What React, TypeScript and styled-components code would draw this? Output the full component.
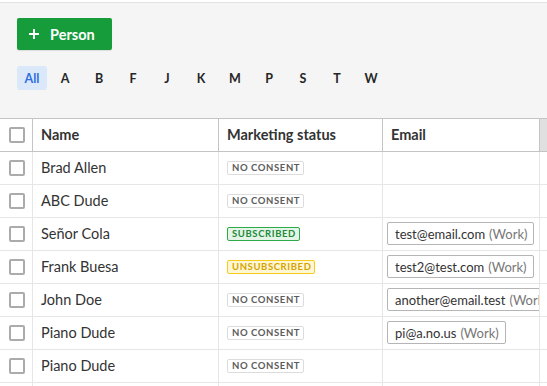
import * as React from 'react';
import styled, { createGlobalStyle, css } from 'styled-components';

const Global = createGlobalStyle`
  html, body { margin: 0; padding: 0; background: #fff; }
  body { font-family: Lato, "Liberation Sans", sans-serif; color: #333; overflow: hidden; }
`;

const Page = styled.div`
  width: 547px;
  height: 386px;
  overflow: hidden;
  padding-top: 2px;
  box-sizing: border-box;
`;

const Toolbar = styled.div`
  background: #f5f5f5;
  border-top: 1px solid #e2e2e2;
  height: 116px;
  box-sizing: border-box;
  padding: 15px 17px 0;
`;

const AddButton = styled.button`
  display: flex;
  align-items: center;
  gap: 10px;
  height: 32px;
  padding: 0 17px 0 11px;
  border: none;
  border-radius: 2px;
  background: #169c3b;
  color: #fff;
  font-family: inherit;
  font-weight: 700;
  font-size: 14.5px;
  box-shadow: 0 1px 1px rgba(0,0,0,0.1);
`;

const Letters = styled.div`
  display: flex;
  align-items: center;
  margin-top: 16px;
`;

const Letter = styled.span<{ $active?: boolean }>`
  width: 34px;
  height: 24px;
  display: flex;
  align-items: center;
  justify-content: center;
  font-size: 12.5px;
  font-weight: 700;
  color: #262626;
  border-radius: 3px;
  ${p => p.$active && css`
    width: 30px;
    margin-right: 1px;
    background: #dbe8fa;
    color: #2f6fe0;
  `}
`;

const Row = styled.div<{ $head?: boolean }>`
  display: grid;
  grid-template-columns: 33px 186px 164px 157px 1fr;
  height: 33px;
  box-sizing: border-box;
  border-bottom: 1px solid ${p => (p.$head ? '#c4c4c4' : '#e6e6e6')};
  ${p => p.$head && css`
    border-top: 1px solid #c4c4c4;
    height: 34px;
    font-weight: 700;
  `}
`;

const Cell = styled.div<{ $head?: boolean; $filler?: boolean }>`
  display: flex;
  align-items: center;
  padding: 0 0 1px 8px;
  border-right: 1px solid ${p => (p.$head ? '#c4c4c4' : '#e6e6e6')};
  font-size: 14.5px;
  overflow: hidden;
  white-space: nowrap;
  ${p => p.$filler && css`
    border-right: none;
    background: ${p.$head ? '#e0e0e0' : 'transparent'};
  `}
`;

const Check = styled.span`
  width: 16px;
  height: 16px;
  box-sizing: border-box;
  margin: 1px 0 0 1px;
  border: 2px solid #ababab;
  border-radius: 2px;
  background: #fff;
`;

type Status = 'none' | 'sub' | 'unsub';

const badgeColors: Record<Status, { b: string; bg: string; c: string }> = {
  none: { b: '#dcdcdc', bg: '#fff', c: '#5c5c5c' },
  sub: { b: '#2eaa4a', bg: '#e4f5e8', c: '#1f8a3a' },
  unsub: { b: '#f6cc1c', bg: '#fff7d4', c: '#d6a300' },
};

const Badge = styled.span<{ $s: Status }>`
  font-size: 9.5px;
  font-weight: 700;
  letter-spacing: 0.6px;
  padding: 0 3px 0 4px;
  line-height: 12px;
  border-radius: 2px;
  border: 1px solid ${p => badgeColors[p.$s].b};
  background: ${p => badgeColors[p.$s].bg};
  color: ${p => badgeColors[p.$s].c};
`;

const EmailBox = styled.span`
  display: inline-flex;
  align-items: center;
  height: 23px;
  box-sizing: border-box;
  padding: 0 6px 0 7px;
  margin-left: -4px;
  border: 1px solid #b5b5b5;
  border-radius: 2px;
  font-size: 13px;
  color: #333;
  white-space: nowrap;
  flex-shrink: 0;
`;

const Kind = styled.span`
  color: #777;
  margin-left: 4px;
`;

const people: { name: string; status: Status; email?: string }[] = [
  { name: 'Brad Allen', status: 'none' },
  { name: 'ABC Dude', status: 'none' },
  { name: 'Señor Cola', status: 'sub', email: 'test@email.com' },
  { name: 'Frank Buesa', status: 'unsub', email: 'test2@test.com' },
  { name: 'John Doe', status: 'none', email: 'another@email.test' },
  { name: 'Piano Dude', status: 'none', email: 'pi@a.no.us' },
  { name: 'Piano Dude', status: 'none' },
];

const labels: Record<Status, string> = {
  none: 'No consent',
  sub: 'Subscribed',
  unsub: 'Unsubscribed',
};

export default function App() {
  const letters = ['A', 'B', 'F', 'J', 'K', 'M', 'P', 'S', 'T', 'W'];
  return (
    <Page>
      <Global />
      <Toolbar>
        <AddButton>
          <svg width="12" height="12" viewBox="0 0 12 12">
            <path d="M6 1v10M1 6h10" stroke="#fff" strokeWidth="2" />
          </svg>
          Person
        </AddButton>
        <Letters>
          <Letter $active>All</Letter>
          {letters.map(l => <Letter key={l}>{l}</Letter>)}
        </Letters>
      </Toolbar>
      <Row $head>
        <Cell $head><Check /></Cell>
        <Cell $head>Name</Cell>
        <Cell $head>Marketing status</Cell>
        <Cell $head>Email</Cell>
        <Cell $head $filler />
      </Row>
      {people.map((p, i) => (
        <Row key={i}>
          <Cell><Check /></Cell>
          <Cell>{p.name}</Cell>
          <Cell><Badge $s={p.status}>{labels[p.status].toUpperCase()}</Badge></Cell>
          <Cell>
            {p.email && (
              <EmailBox>{p.email}<Kind>(Work)</Kind></EmailBox>
            )}
          </Cell>
          <Cell $filler />
        </Row>
      ))}
      <Row>
        <Cell />
        <Cell />
        <Cell />
        <Cell />
        <Cell $filler />
      </Row>
    </Page>
  );
}
